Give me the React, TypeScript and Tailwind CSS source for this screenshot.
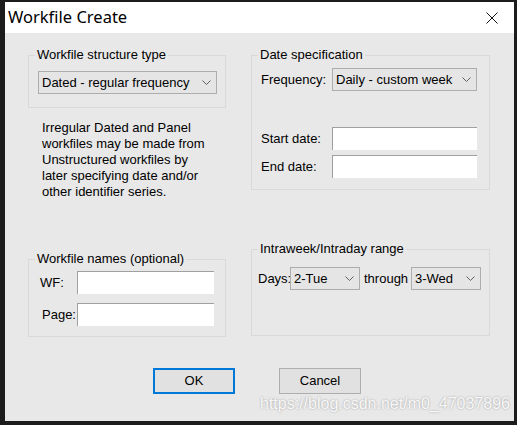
import React from "react";

function Chevron() {
  return (
    <svg width="9" height="5" viewBox="0 0 9 5" className="shrink-0">
      <path d="M0.5 0.5 L4.5 4.5 L8.5 0.5" fill="none" stroke="#606060" strokeWidth="1" />
    </svg>
  );
}

function Combo({ text, className = "" }: { text: string; className?: string }) {
  return (
    <div
      className={`flex items-center justify-between h-[23px] shrink-0 border border-[#adadad] bg-[#e5e5e5] pl-[3px] pr-[5px] leading-none ${className}`}
    >
      <span className="whitespace-nowrap">{text}</span>
      <Chevron />
    </div>
  );
}

function Field({ className = "" }: { className?: string }) {
  return <div className={`h-[23px] shrink-0 bg-white border-t border-l border-[#a0a0a0] ${className}`} />;
}

function Group({
  title,
  className = "",
  children,
}: {
  title: string;
  className?: string;
  children?: React.ReactNode;
}) {
  return (
    <div className={`relative border border-[#d9d9d9] ${className}`}>
      <span className="absolute left-[6px] top-[-9px] px-[2px] bg-[#e8e8e8] leading-[16px] whitespace-nowrap">
        {title}
      </span>
      {children}
    </div>
  );
}

export default function App() {
  return (
    <div className="relative w-[517px] h-[425px] bg-[#1c1c1c] pt-[2px] pl-[5px] pr-[3px] pb-[4px] overflow-hidden">
      <div className="flex flex-col h-full font-['Liberation_Sans',Arial,sans-serif] text-[13px] text-black">
        <div className="h-[31px] shrink-0 bg-white flex items-center justify-between pl-[3px] pr-[16px]">
          <span className="font-['Noto_Sans',sans-serif] text-[16.5px] leading-none text-black">Workfile Create</span>
          <svg width="12" height="12" viewBox="0 0 12 12">
            <path d="M0.5 0.5 L11.5 11.5 M11.5 0.5 L0.5 11.5" stroke="#111" strokeWidth="1" fill="none" />
          </svg>
        </div>
        <div className="flex-1 bg-[#e8e8e8] pl-[23px] pt-[22px]">
          <div className="flex items-start gap-[25px]">
            {/* Left column */}
            <div className="w-[198px] flex flex-col">
              <Group title="Workfile structure type" className="h-[53px] pt-[15px] pl-[9px]">
                <Combo text="Dated - regular frequency" className="w-[179px]" />
              </Group>
              <p className="mt-[12px] pl-[14px] leading-[16px] whitespace-nowrap">
                Irregular Dated and Panel
                <br />
                workfiles may be made from
                <br />
                Unstructured workfiles by
                <br />
                later specifying date and/or
                <br />
                other identifier series.
              </p>
              <Group title="Workfile names (optional)" className="mt-[59px] h-[78px] pt-[11px]">
                <div className="flex items-center">
                  <span className="w-[48px] pl-[11px]">WF:</span>
                  <Field className="w-[137px]" />
                </div>
                <div className="flex items-center mt-[9px]">
                  <span className="w-[48px] pl-[13px]">Page:</span>
                  <Field className="w-[137px]" />
                </div>
              </Group>
            </div>
            {/* Right column */}
            <div className="w-[239px] flex flex-col">
              <Group title="Date specification" className="h-[135px] pt-[12px] pl-[9px]">
                <div className="flex items-center">
                  <span className="w-[71px]">Frequency:</span>
                  <Combo text="Daily - custom week" className="w-[145px]" />
                </div>
                <div className="flex items-center mt-[36px]">
                  <span className="w-[71px]">Start date:</span>
                  <Field className="w-[145px]" />
                </div>
                <div className="flex items-center mt-[5px]">
                  <span className="w-[71px]">End date:</span>
                  <Field className="w-[145px]" />
                </div>
              </Group>
              <Group title="Intraweek/Intraday range" className="mt-[59px] h-[87px] pt-[17px] pl-[6px]">
                <div className="flex items-center">
                  <span className="w-[32px] shrink-0 whitespace-nowrap">Days:</span>
                  <Combo text="2-Tue" className="w-[70px]" />
                  <span className="ml-[4px] w-[47px] shrink-0">through</span>
                  <Combo text="3-Wed" className="w-[70px]" />
                </div>
              </Group>
            </div>
          </div>
          <div className="flex mt-[31px] pl-[125px]">
            <div className="w-[82px] h-[26px] border-2 border-[#0078d7] bg-[#e1e1e1] flex items-center justify-center">
              OK
            </div>
            <div className="ml-[44px] w-[82px] h-[26px] border border-[#adadad] bg-[#e1e1e1] flex items-center justify-center">
              Cancel
            </div>
          </div>
        </div>
      </div>
      <div className="absolute left-[260px] top-[396px] font-['Liberation_Sans',Arial,sans-serif] text-[16px] leading-[16px] text-[#f8f8f8] [text-shadow:0_0_2px_rgba(0,0,0,0.35)] whitespace-nowrap">
        https://blog.csdn.net/m0_47037896
      </div>
    </div>
  );
}
